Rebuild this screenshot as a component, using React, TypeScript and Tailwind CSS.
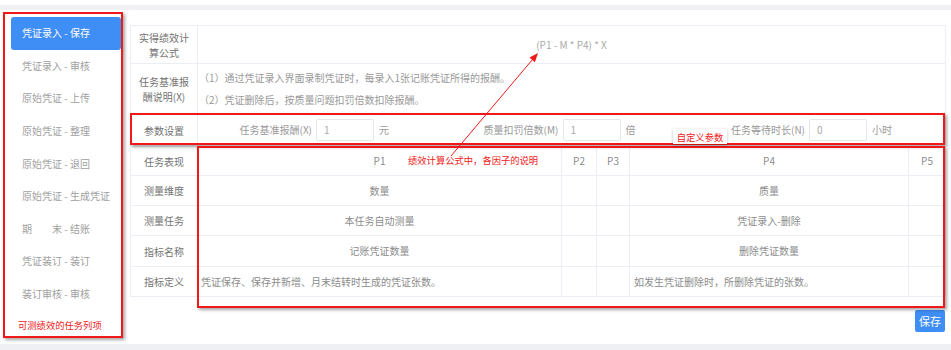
import React from "react";

const menu = [
  "凭证录入 - 保存",
  "凭证录入 - 审核",
  "原始凭证 - 上传",
  "原始凭证 - 整理",
  "原始凭证 - 退回",
  "原始凭证 - 生成凭证",
  "期　　末 - 结账",
  "凭证装订 - 装订",
  "装订审核 - 审核",
];

function Param({ label, value, unit }: { label: string; value: string; unit: string }) {
  return (
    <div className="flex items-center w-[246.5px] shrink-0">
      <div className="w-[110px] text-right pr-[4px] text-[#999] whitespace-nowrap">{label}</div>
      <div className="w-[58px] h-[22px] border border-[#e4e7ed] rounded-[2px] flex items-center pl-[7px] text-[#aaa]">
        {value}
      </div>
      <div className="pl-[5px] text-[#999]">{unit}</div>
    </div>
  );
}

export default function App() {
  const cell = "border border-[#ebeef5] p-0";
  const lab = "border border-[#ebeef5] p-0 text-center text-[#727272] leading-[15px]";
  const mid = "border border-[#ebeef5] p-0 text-center text-[#8c8c8c] leading-[14px]";
  return (
    <div className="relative w-[951px] h-[350px] bg-white overflow-hidden text-[10px] leading-[14px] font-['Noto_Sans_CJK_SC',sans-serif]">
      <div className="h-[5px]" />
      <div className="h-[5px] bg-[#eef0f3]" />
      <div className="flex h-[334px]">
        <div className="w-[130px] shrink-0 pl-[11px] pt-[7px]">
          {menu.map((m, i) => (
            <div
              key={m}
              className={
                i === 0
                  ? "h-[32.6px] w-[110px] flex items-center pl-[11px] rounded-[3px] bg-[#3f8ef6] text-white"
                  : "h-[32.6px] w-[110px] flex items-center pl-[11px] text-[#a0a0a0]"
              }
            >
              {m}
            </div>
          ))}
        </div>
        <div className="flex flex-col pt-[15px]">
          <table className="border-collapse table-fixed w-[815px]">
            <colgroup>
              <col className="w-[67px]" />
              <col className="w-[364px]" />
              <col className="w-[35px]" />
              <col className="w-[33px]" />
              <col className="w-[279px]" />
              <col className="w-[37px]" />
            </colgroup>
            <tbody>
              <tr className="h-[38px]">
                <td className={lab}>
                  实得绩效计
                  <br />
                  算公式
                </td>
                <td colSpan={5} className={`${cell} text-center text-[#aaa]`}>
                  (P1 - M * P4) * X
                </td>
              </tr>
              <tr className="h-[50px]">
                <td className={lab}>
                  任务基准报
                  <br />
                  酬说明(X)
                </td>
                <td colSpan={5} className={`${cell} pl-[1px] text-[#999] leading-[22px]`}>
                  <div>（1）通过凭证录入界面录制凭证时，每录入1张记账凭证所得的报酬。</div>
                  <div>（2）凭证删除后，按质量问题扣罚倍数扣除报酬。</div>
                </td>
              </tr>
              <tr className="h-[33px]">
                <td className={lab}>参数设置</td>
                <td colSpan={5} className={`${cell} pl-[8px]`}>
                  <div className="flex items-center">
                    <Param label="任务基准报酬(X)" value="1" unit="元" />
                    <Param label="质量扣罚倍数(M)" value="1" unit="倍" />
                    <Param label="任务等待时长(N)" value="0" unit="小时" />
                  </div>
                </td>
              </tr>
              <tr className="h-[29px]">
                <td className={lab}>任务表现</td>
                <td className={mid}>P1</td>
                <td className={mid}>P2</td>
                <td className={mid}>P3</td>
                <td className={mid}>P4</td>
                <td className={mid}>P5</td>
              </tr>
              <tr className="h-[30px]">
                <td className={lab}>测量维度</td>
                <td className={mid}>数量</td>
                <td className={cell} />
                <td className={cell} />
                <td className={mid}>质量</td>
                <td className={cell} />
              </tr>
              <tr className="h-[30px]">
                <td className={lab}>测量任务</td>
                <td className={mid}>本任务自动测量</td>
                <td className={cell} />
                <td className={cell} />
                <td className={mid}>凭证录入-删除</td>
                <td className={cell} />
              </tr>
              <tr className="h-[31px]">
                <td className={lab}>指标名称</td>
                <td className={mid}>记账凭证数量</td>
                <td className={cell} />
                <td className={cell} />
                <td className={mid}>删除凭证数量</td>
                <td className={cell} />
              </tr>
              <tr className="h-[30px]">
                <td className={lab}>指标定义</td>
                <td className={`${cell} pl-[3px] text-[#8c8c8c]`}>凭证保存、保存并新增、月末结转时生成的凭证张数。</td>
                <td className={cell} />
                <td className={cell} />
                <td className={`${cell} pl-[4px] text-[#8c8c8c]`}>如发生凭证删除时，所删除凭证的张数。</td>
                <td className={cell} />
              </tr>
            </tbody>
          </table>
          <div className="flex justify-end mt-[13px] w-[815px]">
            <button className="w-[30px] h-[22px] rounded-[2px] bg-[#3f8ef6] text-white text-[11px] leading-[22px]">
              保存
            </button>
          </div>
        </div>
      </div>
      <div className="h-[6px] bg-[#eef0f3]" />

      {/* annotations */}
      <div className="absolute left-[3px] top-[12px] w-[120px] h-[326px] border-2 border-[#f01818] shadow-[2px_2px_3px_rgba(0,0,0,0.35)] pointer-events-none" />
      <div className="absolute left-[18px] top-[318px] text-[9.3px] leading-[14px] text-[#f01818]">可测绩效的任务列项</div>
      <div className="absolute left-[130px] top-[113px] w-[815px] h-[32px] border-2 border-[#f01818] shadow-[2px_2px_3px_rgba(0,0,0,0.35)] pointer-events-none" />
      <div className="absolute left-[197px] top-[146px] w-[748px] h-[162px] border-2 border-[#f01818] shadow-[2px_2px_3px_rgba(0,0,0,0.35)] pointer-events-none" />
      <div className="absolute left-[673px] top-[129px] w-[54px] h-[15px] bg-white shadow-[0_1px_3px_rgba(0,0,0,0.25)] flex items-center justify-center text-[9.3px] text-[#f01818]">
        自定义参数
      </div>
      <div className="absolute left-[408px] top-[153px] text-[9.3px] leading-[14px] text-[#f01818]">
        绩效计算公式中，各因子的说明
      </div>
      <svg className="absolute left-0 top-0 pointer-events-none" width="951" height="350">
        <line x1="451" y1="156" x2="532.5" y2="59.5" stroke="#f01818" strokeWidth="1" />
        <polygon points="538,53 534.9,62.2 529.5,57.6" fill="#f01818" />
      </svg>
    </div>
  );
}
